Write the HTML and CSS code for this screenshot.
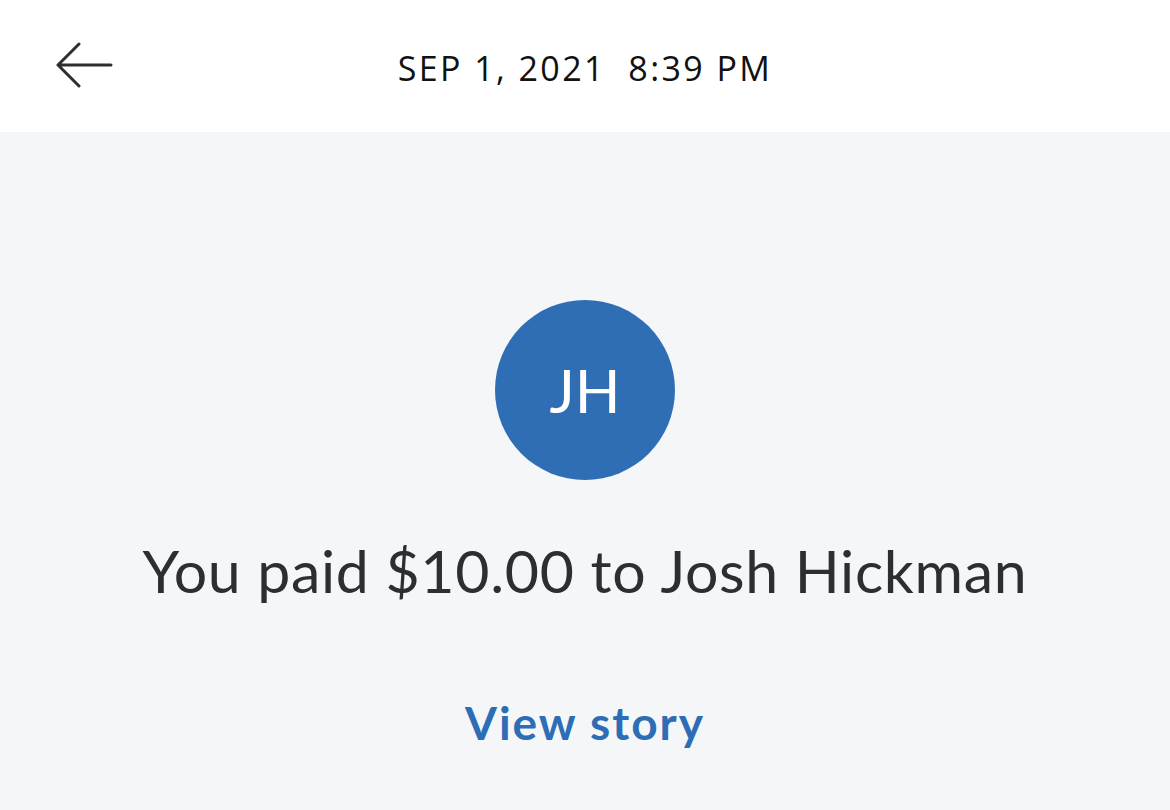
FILE: index.html
```html
<!DOCTYPE html>
<html lang="en">
<head>
    <meta charset="UTF-8">
    <meta name="viewport" content="width=device-width, initial-scale=1.0">
    <title>Activity details</title>
    <link rel="stylesheet" href="styles.css">
</head>
<body>

    <header class="top-bar">
        <a class="back" href="#" aria-label="Back">
            <svg width="58" height="48" viewBox="0 0 58 48">
                <path d="M2 23 H55 M2 23 L23 2 M2 23 L23 44" fill="none" stroke="#2c2e2f" stroke-width="3" stroke-linecap="round" stroke-linejoin="round"/>
            </svg>
        </a>
        <h1 class="date">SEP 1, 2021&nbsp; 8:39 PM</h1>
        <span></span>
    </header>

    <main class="details">
        <div class="avatar">JH</div>
        <h2 class="summary">You paid $10.00 to Josh Hickman</h2>
        <a class="story-link" href="#">View story</a>
    </main>

</body>
</html>
```

FILE: styles.css
```css
html, body {
    margin: 0;
    height: 100%;
}
body {
    font-family: Lato, "Open Sans", sans-serif;
    background-color: #f5f6f8;
    color: #2c2e2f;
}
.top-bar {
    height: 132px;
    background-color: #fff;
    display: grid;
    grid-template-columns: 1fr auto 1fr;
    align-items: center;
    padding: 0 56px;
    box-sizing: border-box;
}
.back {
    display: flex;
    width: 58px;
    margin-top: -1px;
}
.date {
    margin: 0;
    font-family: "Open Sans", sans-serif;
    font-weight: 400;
    font-size: 34px;
    letter-spacing: 2.4px;
    color: #111;
    padding-top: 3px;
}
.details {
    display: flex;
    flex-direction: column;
    align-items: center;
    padding-top: 168px;
}
.avatar {
    width: 180px;
    height: 180px;
    border-radius: 50%;
    background-color: #2f6eb5;
    color: #fff;
    font-size: 60px;
    font-weight: 400;
    display: flex;
    align-items: center;
    justify-content: center;
}
.summary {
    margin: 56px 0 0;
    font-size: 59px;
    font-weight: 400;
    letter-spacing: 0.7px;
    line-height: 1.2;
}
.story-link {
    margin-top: 88px;
    font-size: 46px;
    font-weight: 700;
    letter-spacing: 2px;
    line-height: 1.2;
    color: #2c6db5;
    text-decoration: none;
}
```
